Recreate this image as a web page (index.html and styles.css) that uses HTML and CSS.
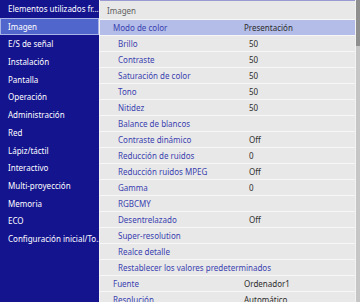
FILE: index.html
```html
<!DOCTYPE html>
<html lang="es">
<head>
    <meta charset="UTF-8">
    <title>Imagen</title>
    <link rel="stylesheet" href="styles.css">
</head>
<body>
    <div class="screen">
        <ul class="menu">
            <li>Elementos utilizados fr...</li>
            <li class="active">Imagen</li>
            <li>E/S de señal</li>
            <li>Instalación</li>
            <li>Pantalla</li>
            <li>Operación</li>
            <li>Administración</li>
            <li>Red</li>
            <li>Lápiz/táctil</li>
            <li>Interactivo</li>
            <li>Multi-proyección</li>
            <li>Memoria</li>
            <li>ECO</li>
            <li>Configuración inicial/To...</li>
        </ul>

        <div class="panel">
            <div class="title">Imagen</div>
            <div class="row selected"><span class="label">Modo de color</span><span class="value">Presentación</span></div>
            <div class="row sub"><span class="label">Brillo</span><span class="value">50</span></div>
            <div class="row sub"><span class="label">Contraste</span><span class="value">50</span></div>
            <div class="row sub"><span class="label">Saturación de color</span><span class="value">50</span></div>
            <div class="row sub"><span class="label">Tono</span><span class="value">50</span></div>
            <div class="row sub"><span class="label">Nitidez</span><span class="value">50</span></div>
            <div class="row sub"><span class="label">Balance de blancos</span><span class="value"></span></div>
            <div class="row sub"><span class="label">Contraste dinámico</span><span class="value">Off</span></div>
            <div class="row sub"><span class="label">Reducción de ruidos</span><span class="value">0</span></div>
            <div class="row sub"><span class="label">Reducción ruidos MPEG</span><span class="value">Off</span></div>
            <div class="row sub"><span class="label">Gamma</span><span class="value">0</span></div>
            <div class="row sub"><span class="label">RGBCMY</span><span class="value"></span></div>
            <div class="row sub"><span class="label">Desentrelazado</span><span class="value">Off</span></div>
            <div class="row sub"><span class="label">Super-resolution</span><span class="value"></span></div>
            <div class="row sub"><span class="label">Realce detalle</span><span class="value"></span></div>
            <div class="row sub"><span class="label">Restablecer los valores predeterminados</span><span class="value"></span></div>
            <div class="row"><span class="label">Fuente</span><span class="value">Ordenador1</span></div>
            <div class="row"><span class="label">Resolución</span><span class="value">Automático</span></div>
        </div>

        <div class="scrollbar"><div class="thumb"></div></div>
    </div>
</body>
</html>
```

FILE: styles.css
```css
body {
    margin: 0;
    padding: 0;
    font-family: 'Noto Sans', 'Open Sans', sans-serif;
    font-size: 8px;
    background: #e9e9e9;
}

.screen {
    display: flex;
    width: 360px;
    height: 302px;
    overflow: hidden;
}

.menu {
    list-style: none;
    margin: 0;
    padding: 0;
    width: 99px;
    flex-shrink: 0;
    background: #14148f;
    border-right: 1px solid #f2f2f2;
    color: #ffffff;
}

.menu li {
    height: 17.7px;
    line-height: 17.7px;
    padding-left: 8px;
    white-space: nowrap;
    box-sizing: border-box;
}

.menu li.active {
    background: #5066cc;
    border: 1px solid #a9b4e6;
    line-height: 15.7px;
    padding-left: 7px;
}

.panel {
    flex: 1;
    background: #e8e8e8;
    border-top: 1px solid #9a9ad0;
    color: #2d2d2d;
}

.title {
    height: 19px;
    line-height: 19px;
    padding-left: 7px;
    color: #606060;
    border-bottom: 1px solid #f7f7f7;
    box-sizing: border-box;
}

.row {
    display: flex;
    height: 16px;
    line-height: 15px;
    border-bottom: 1px solid #f7f7f7;
    box-sizing: border-box;
    white-space: nowrap;
}

.row.selected {
    background: #b3bde8;
}

.row .label {
    width: 131px;
    padding-left: 13px;
    color: #3a3fb0;
}

.row.sub .label {
    padding-left: 18px;
}

.row .value {
    flex: 1;
}

.scrollbar {
    width: 4px;
    flex-shrink: 0;
    background: #c6c6c6;
    border-left: 1px solid #f2f2f2;
}

.thumb {
    height: 46px;
    background: #8f8f8f;
}
```
